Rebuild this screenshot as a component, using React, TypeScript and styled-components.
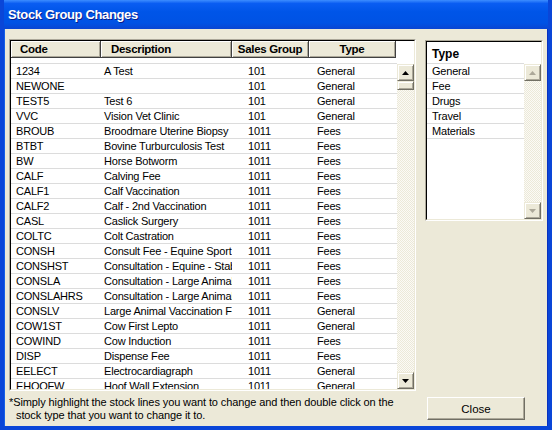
import React from "react";
import styled, { createGlobalStyle } from "styled-components";

const GlobalStyle = createGlobalStyle`
  html, body {
    margin: 0;
    padding: 0;
    background: #0a46d8;
  }
  body {
    font-family: "Liberation Sans", Arial, sans-serif;
  }
`;

type Item = { code: string; desc: string; group: string; type: string };

const items: Item[] = [
  { code: "1234", desc: "A Test", group: "101", type: "General" },
  { code: "NEWONE", desc: "", group: "101", type: "General" },
  { code: "TEST5", desc: "Test 6", group: "101", type: "General" },
  { code: "VVC", desc: "Vision Vet Clinic", group: "101", type: "General" },
  { code: "BROUB", desc: "Broodmare Uterine Biopsy", group: "1011", type: "Fees" },
  { code: "BTBT", desc: "Bovine Turburculosis Test", group: "1011", type: "Fees" },
  { code: "BW", desc: "Horse Botworm", group: "1011", type: "Fees" },
  { code: "CALF", desc: "Calving Fee", group: "1011", type: "Fees" },
  { code: "CALF1", desc: "Calf Vaccination", group: "1011", type: "Fees" },
  { code: "CALF2", desc: "Calf - 2nd Vaccination", group: "1011", type: "Fees" },
  { code: "CASL", desc: "Caslick Surgery", group: "1011", type: "Fees" },
  { code: "COLTC", desc: "Colt Castration", group: "1011", type: "Fees" },
  { code: "CONSH", desc: "Consult Fee - Equine Sport", group: "1011", type: "Fees" },
  { code: "CONSHST", desc: "Consultation - Equine - Stable", group: "1011", type: "Fees" },
  { code: "CONSLA", desc: "Consultation - Large Animal", group: "1011", type: "Fees" },
  { code: "CONSLAHRS", desc: "Consultation - Large Animal AH", group: "1011", type: "Fees" },
  { code: "CONSLV", desc: "Large Animal Vaccination Fee", group: "1011", type: "General" },
  { code: "COW1ST", desc: "Cow First Lepto", group: "1011", type: "General" },
  { code: "COWIND", desc: "Cow Induction", group: "1011", type: "Fees" },
  { code: "DISP", desc: "Dispense Fee", group: "1011", type: "Fees" },
  { code: "EELECT", desc: "Electrocardiagraph", group: "1011", type: "General" },
  { code: "EHOOFW", desc: "Hoof Wall Extension", group: "1011", type: "General" },
];

const stockTypes = ["General", "Fee", "Drugs", "Travel", "Materials"];

// header widths and text inset per column
const columns = [
  { label: "Code", width: 90, headPad: 9, cellPad: 5, center: false },
  { label: "Description", width: 131, headPad: 10, cellPad: 3, center: false },
  { label: "Sales Group", width: 77, headPad: 0, cellPad: 16, center: true },
  { label: "Type", width: 87, headPad: 0, cellPad: 8, center: true },
];

const Arrow = ({ down, disabled }: { down?: boolean; disabled?: boolean }) => (
  <svg width="7" height="4" viewBox="0 0 7 4">
    <polygon
      points={down ? "0,0 7,0 3.5,4" : "0,4 7,4 3.5,0"}
      fill={disabled ? "#aca899" : "#000"}
    />
  </svg>
);

const ScrollBar = ({ disabled }: { disabled?: boolean }) => (
  <Scroll>
    <ScrollButton>
      <Arrow disabled={disabled} />
    </ScrollButton>
    {!disabled && <Thumb />}
    <Track />
    <ScrollButton>
      <Arrow down disabled={disabled} />
    </ScrollButton>
  </Scroll>
);

const App = () => {
  return (
    <>
      <GlobalStyle />
      <Window>
        <TitleBar>Stock Group Changes</TitleBar>
        <Body>
          <Sunken $w={407} $h={352}>
            <SunkenInner>
              <HeadRow>
                {columns.map((c) => (
                  <HeadCell key={c.label} $w={c.width} $pad={c.headPad} $center={c.center}>
                    {c.label}
                  </HeadCell>
                ))}
                <HeadFiller />
              </HeadRow>
              <GapRow>
                <GapLine />
                <GapBlank />
              </GapRow>
              <ListArea>
                <Rows>
                  {items.map((it) => (
                    <Row key={it.code}>
                      <Cell $w={columns[0].width} $pad={columns[0].cellPad}>{it.code}</Cell>
                      <Cell $w={columns[1].width} $pad={columns[1].cellPad}>{it.desc}</Cell>
                      <Cell $w={columns[2].width} $pad={columns[2].cellPad}>{it.group}</Cell>
                      <Cell $w={columns[3].width} $pad={columns[3].cellPad}>{it.type}</Cell>
                    </Row>
                  ))}
                </Rows>
                <ScrollBar />
              </ListArea>
            </SunkenInner>
          </Sunken>

          <Sunken $w={118} $h={181} $top={1}>
            <SunkenInner>
              <TypeHead>Type</TypeHead>
              <ListArea>
                <Rows>
                  {stockTypes.map((t) => (
                    <Row key={t}>
                      <Cell $w={97} $pad={5}>{t}</Cell>
                    </Row>
                  ))}
                </Rows>
                <ScrollBar disabled />
              </ListArea>
            </SunkenInner>
          </Sunken>

          <Footnote>
            <FootLine>*Simply highlight the stock lines you want to change and then double click on the</FootLine>
            <FootLine $indent={7}>stock type that you want to change it to.</FootLine>
          </Footnote>
          <CloseButton>Close</CloseButton>
        </Body>
      </Window>
    </>
  );
};

const Window = styled.div`
  width: 552px;
  height: 430px;
  box-sizing: border-box;
  display: flex;
  flex-direction: column;
  background: #ece9d8;
  border: 4px solid #0a46d8;
  border-top: none;
  box-shadow: inset 1px 0 #1660e8, inset -1px 0 #0831c0;
  overflow: hidden;
`;

const TitleBar = styled.div`
  height: 29px;
  margin: 0 -4px;
  padding-left: 8px;
  display: flex;
  align-items: center;
  background: linear-gradient(
    180deg,
    #3d8dff 0%,
    #0a5df2 12%,
    #0055e8 40%,
    #0052e4 80%,
    #0a45d2 100%
  );
  color: #fff;
  font-family: "Liberation Sans", Arial, sans-serif;
  font-size: 13px;
  font-weight: bold;
  letter-spacing: -0.35px;
  text-shadow: 1px 1px #0a1e8c;
`;

const Body = styled.div`
  flex: 1;
  display: grid;
  grid-template-columns: 407px 118px;
  grid-template-rows: auto 1fr;
  column-gap: 9px;
  align-items: start;
  padding: 10px 0 0 5px;
  font-size: 11px;
  color: #000;
`;

const Sunken = styled.div<{ $w: number; $h: number; $top?: number }>`
  width: ${(p) => p.$w}px;
  height: ${(p) => p.$h}px;
  margin-top: ${(p) => p.$top || 0}px;
  box-sizing: border-box;
  border: 1px solid;
  border-color: #aca899 #fff #fff #aca899;
`;

const SunkenInner = styled.div`
  height: 100%;
  box-sizing: border-box;
  border: 1px solid;
  border-color: #000 #ece9d8 #ece9d8 #000;
  background: #fff;
  display: flex;
  flex-direction: column;
  overflow: hidden;
`;

const HeadRow = styled.div`
  display: flex;
  height: 17px;
  flex-shrink: 0;
`;

const HeadCell = styled.div<{ $w: number; $pad: number; $center: boolean }>`
  width: ${(p) => p.$w}px;
  box-sizing: border-box;
  padding-left: ${(p) => p.$pad}px;
  display: flex;
  align-items: center;
  justify-content: ${(p) => (p.$center ? "center" : "flex-start")};
  background: #ece9d8;
  border-right: 1px solid #404040;
  border-bottom: 1px solid #404040;
  box-shadow: inset 1px 1px #fff, inset -1px -1px #aca899;
  font-weight: bold;
  font-size: 11.5px;
  letter-spacing: -0.3px;
  white-space: nowrap;
`;

const HeadFiller = styled.div`
  flex: 1;
`;

const GapRow = styled.div`
  display: flex;
  height: 6px;
  flex-shrink: 0;
`;

const GapLine = styled.div`
  width: 386px;
  border-bottom: 1px solid #dcdcdc;
`;

const GapBlank = styled.div`
  flex: 1;
`;

const ListArea = styled.div`
  flex: 1;
  display: flex;
  min-height: 0;
`;

const Rows = styled.div`
  flex: 1;
  overflow: hidden;
`;

const Row = styled.div`
  display: flex;
  height: 15px;
  box-sizing: border-box;
  border-bottom: 1px solid #dcdcdc;
`;

const Cell = styled.div<{ $w: number; $pad: number }>`
  width: ${(p) => p.$w}px;
  box-sizing: border-box;
  padding-left: ${(p) => p.$pad}px;
  line-height: 14px;
  font-size: 11px;
  letter-spacing: -0.2px;
  white-space: nowrap;
  overflow: hidden;
`;

const TypeHead = styled.div`
  height: 22px;
  flex-shrink: 0;
  box-sizing: border-box;
  padding: 3px 0 0 5px;
  display: flex;
  align-items: center;
  border-bottom: 1px solid #dcdcdc;
  margin-right: 17px;
  font-weight: bold;
  font-size: 12px;
`;

const Scroll = styled.div`
  width: 17px;
  display: flex;
  flex-direction: column;
  flex-shrink: 0;
`;

const ScrollButton = styled.div`
  height: 17px;
  flex-shrink: 0;
  box-sizing: border-box;
  display: flex;
  align-items: center;
  justify-content: center;
  background: #ece9d8;
  border: 1px solid;
  border-color: #ece9d8 #716f64 #716f64 #ece9d8;
  box-shadow: inset 1px 1px #fff, inset -1px -1px #aca899;
`;

const Thumb = styled(ScrollButton)`
  height: 9px;
`;

const Track = styled.div`
  flex: 1;
  background: repeating-conic-gradient(#ece9d8 0 25%, #fbfaf6 0 50%) 0 0 / 2px 2px;
`;

const Footnote = styled.div`
  padding-top: 5px;
  font-size: 11px;
  line-height: 13px;
  letter-spacing: -0.1px;
`;

const FootLine = styled.div<{ $indent?: number }>`
  padding-left: ${(p) => p.$indent || 0}px;
  white-space: nowrap;
`;

const CloseButton = styled.button`
  margin: 6px 0 0 2px;
  width: 98px;
  height: 23px;
  padding: 0;
  background: #ece9d8;
  border: 1px solid;
  border-color: #fff #716f64 #716f64 #fff;
  box-shadow: inset -1px -1px #aca899;
  font-family: "Liberation Sans", Arial, sans-serif;
  font-size: 11.5px;
  color: #000;
  cursor: pointer;
`;

export default App;
